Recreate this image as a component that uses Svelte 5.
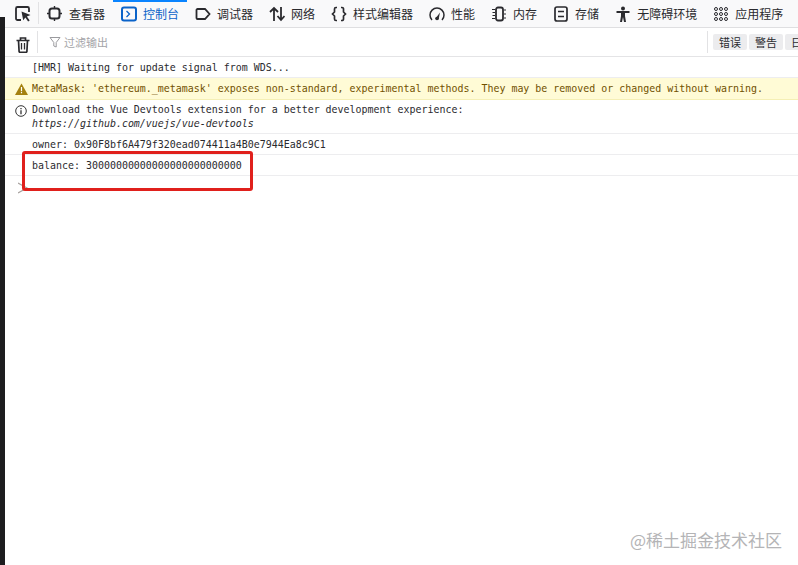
<script>
  const tabs = [
    { id: 'inspector', label: '查看器' },
    { id: 'console', label: '控制台', active: true },
    { id: 'debugger', label: '调试器' },
    { id: 'network', label: '网络' },
    { id: 'style', label: '样式编辑器' },
    { id: 'perf', label: '性能' },
    { id: 'memory', label: '内存' },
    { id: 'storage', label: '存储' },
    { id: 'a11y', label: '无障碍环境' },
    { id: 'app', label: '应用程序' }
  ];
</script>

<div class="page">
  <header class="tabs">
    <div class="picker">
      <svg width="18" height="18" viewBox="0 0 18 18" fill="none">
        <path d="M7 15H3.500A1.500 1.500 0 0 1 2 13.500V3.500A1.500 1.500 0 0 1 3.500 2h10A1.500 1.500 0 0 1 15 3.500V7" stroke="#2b2b2f" stroke-width="1.800"/>
        <path d="M7.500 6.500l9 3.500-3.600 1.400 2.800 4-1.600 1.100-2.700-4-2.200 2.800z" fill="#2b2b2f"/>
      </svg>
    </div>
    {#each tabs as t}
      <div class="tab" class:active={t.active}>
        <svg width="16" height="16" viewBox="0 0 16 16" fill="none" stroke="currentColor" stroke-width="1.600">
          {#if t.id === 'inspector'}
            <rect x="2.500" y="2.500" width="10" height="10" rx="2.500" stroke-width="2"/>
            <path d="M7.500 0v2.500M7.500 12.500V15M0 7.500h2.500M12.500 7.500H15" stroke-width="1.400"/>
          {:else if t.id === 'console'}
            <rect x="1" y="1.500" width="14" height="13" rx="2" stroke-width="2"/>
            <path d="M5.500 5l3 3-3 3" stroke-width="1.300"/>
          {:else if t.id === 'debugger'}
            <path d="M2.500 3h7.500l4.500 5-4.500 5H2.500a1 1 0 0 1-1-1V4a1 1 0 0 1 1-1z" stroke-width="1.800"/>
          {:else if t.id === 'network'}
            <path d="M5 15V2M1 6l4-4 4 4M12 1v13M8.500 10l3.500 4 3.500-4" stroke-width="1.800"/>
          {:else if t.id === 'style'}
            <path d="M6 1.500H5a1.500 1.500 0 0 0-1.500 1.500v3L1.500 8l2 2v3A1.500 1.500 0 0 0 5 14.500h1M10 1.500h1A1.500 1.500 0 0 1 12.500 3v3l2 2-2 2v3a1.500 1.500 0 0 1-1.500 1.500h-1" stroke-width="1.700"/>
          {:else if t.id === 'perf'}
            <path d="M3 14A7 7 0 1 1 13 14" stroke-width="1.500"/>
            <path d="M6.500 12.500L11 6.500 9.500 13.500z" fill="currentColor" stroke="none"/>
            <circle cx="8" cy="12.500" r="1.800" fill="currentColor" stroke="none"/>
          {:else if t.id === 'memory'}
            <rect x="5" y="1.500" width="7" height="13" rx="2" stroke-width="1.800"/>
            <path d="M1 3.500h3M1.500 6.500H4M1.500 9.500H4M1 12.500h3M13 4h2M13 8h2M13 12h2" stroke-width="1"/>
          {:else if t.id === 'storage'}
            <rect x="2" y="1" width="12" height="14" rx="2" stroke-width="1.700"/>
            <path d="M5 5.500h6M5 10.500h6" stroke-width="1.500"/>
          {:else if t.id === 'a11y'}
            <circle cx="8" cy="2.500" r="2" fill="currentColor" stroke="none"/>
            <path d="M1.500 6h13" stroke-width="2"/>
            <path d="M6 6h4v4l1 6H9L8 11l-1 5H5l1-6z" fill="currentColor" stroke="none"/>
          {:else}
            <g stroke-width="1">
              <circle cx="3" cy="3" r="1.500"/><circle cx="8" cy="3" r="1.500"/><circle cx="13" cy="3" r="1.500"/>
              <circle cx="3" cy="8" r="1.500"/><circle cx="8" cy="8" r="1.500"/><circle cx="13" cy="8" r="1.500"/>
              <circle cx="3" cy="13" r="1.500"/><circle cx="8" cy="13" r="1.500"/><circle cx="13" cy="13" r="1.500"/>
            </g>
          {/if}
        </svg>
        <span>{t.label}</span>
      </div>
    {/each}
  </header>

  <div class="filterbar">
    <div class="trash">
      <svg width="16" height="16" viewBox="0 0 16 16" fill="none" stroke="#2b2b2f" stroke-width="1.700">
        <path d="M1.500 3.500h13M5.500 3.500V1h5v2.500M3.500 3.500l.6 11a1 1 0 0 0 1 .8h5.800a1 1 0 0 0 1-.8l.6-11"/>
        <path d="M6.500 6v6.500M9.500 6v6.500" stroke-width="1.300"/>
      </svg>
    </div>
    <div class="filter">
      <svg width="12" height="12" viewBox="0 0 12 12" fill="none" stroke="#9a9a9e" stroke-width="1">
        <path d="M1 1.500h10L7.200 6.500V11L4.800 10V6.500z"/>
      </svg>
      <span>过滤输出</span>
    </div>
    <div class="chips">
      <span class="chip">错误</span>
      <span class="chip">警告</span>
      <span class="chip">日志</span>
    </div>
  </div>

  <div class="log">
    <div class="row">[HMR] Waiting for update signal from WDS...</div>
    <div class="row warn">
      <svg class="ico" width="13" height="12" viewBox="0 0 13 12">
        <path d="M6.500.5L13 12H0z" fill="#a4800f"/>
        <path d="M5.900 4h1.200v4.200H5.900zM5.900 9h1.200v1.300H5.900z" fill="#fff"/>
      </svg>
      MetaMask: 'ethereum._metamask' exposes non-standard, experimental methods. They may be removed or changed without warning.
    </div>
    <div class="row info">
      <svg class="ico" width="12" height="12" viewBox="0 0 12 12" fill="none" stroke="#333">
        <circle cx="6" cy="6" r="5.300"/>
        <path d="M6 5.200v4M6 3v1.200" stroke-width="1.300"/>
      </svg>
      <div>Download the Vue Devtools extension for a better development experience:<br /><em>https://github.com/vuejs/vue-devtools</em></div>
    </div>
    <div class="row">owner: 0x90F8bf6A479f320ead074411a4B0e7944Ea8c9C1</div>
    <div class="row">balance: 30000000000000000000000000</div>
    <div class="prompt">
      <svg width="12" height="12" viewBox="0 0 12 12" fill="none" stroke="#a8a29f" stroke-width="1.200">
        <path d="M0 1l9 5-9 5"/>
      </svg>
    </div>
  </div>

  <div class="strip"></div>
  <div class="mark"></div>
  <div class="watermark">@稀土掘金技术社区</div>
</div>

<style>
  :global(body) { margin: 0; background: #fff; }
  .page {
    position: relative;
    width: 798px;
    height: 565px;
    overflow: hidden;
    font-family: "Noto Sans CJK SC", "Noto Sans", sans-serif;
    color: #1f1f23;
  }
  .tabs {
    display: flex;
    height: 27px;
    background: #f9f9fa;
    border-bottom: 1px solid #dfdfe1;
    white-space: nowrap;
  }
  .picker {
    width: 39px;
    box-sizing: border-box;
    padding: 2px 0 0 14px;
    border-right: 1px solid #e2e2e4;
    height: 22px;
    margin-top: 2px;
    flex: none;
  }
  .tab {
    display: flex;
    align-items: center;
    gap: 6px;
    padding: 0 8px;
    font-size: 12px;
    flex: none;
    height: 27px;
    box-sizing: border-box;
    color: #2a2a2e;
    position: relative;
  }
  .tab.active { color: #0a63c9; }
  .tab.active::before {
    content: "";
    position: absolute;
    left: 0;
    right: 0;
    top: 0;
    height: 2px;
    background: #0a84ff;
  }
  .filterbar {
    display: flex;
    align-items: center;
    height: 28px;
    border-bottom: 1px solid #e4e4e6;
  }
  .trash {
    width: 38px;
    height: 22px;
    box-sizing: border-box;
    padding: 3px 0 0 15px;
    border-right: 1px solid #e2e2e4;
    flex: none;
  }
  .filter {
    display: flex;
    align-items: center;
    gap: 3px;
    padding-left: 11px;
    font-size: 11px;
    color: #a4a4a8;
    flex: 1;
  }
  .chips {
    display: flex;
    gap: 2px;
    width: 91px;
    height: 22px;
    box-sizing: border-box;
    padding: 3px 0 0 5px;
    border-left: 1px solid #e2e2e4;
    overflow: hidden;
    flex: none;
    align-items: flex-start;
  }
  .chip {
    background: #ececee;
    font-size: 11px;
    line-height: 16px;
    padding: 0 6px;
    border-radius: 2px;
    flex: none;
    color: #2a2a2e;
  }
  .log {
    font-family: "DejaVu Sans Mono", monospace;
    font-size: 9.96px;
    line-height: 13px;
  }
  .row {
    padding: 4px 0 3px 32px;
    border-bottom: 1px solid #ededef;
    position: relative;
    white-space: nowrap;
    color: #2a2a2e;
  }
  .warn {
    background: #fffbd6;
    color: #715100;
    border-bottom-color: #f5efb5;
    padding: 4px 0 4px 32px;
  }
  .info {
    line-height: 14px;
    padding: 3px 0 2px 32px;
  }
  .info em { font-style: italic; }
  .ico { position: absolute; left: 15px; top: 5px; }
  .prompt { padding: 6px 0 0 18px; }
  .strip {
    position: absolute;
    left: 0;
    top: 17px;
    bottom: 0;
    width: 5px;
    background: #1d1d1f;
  }
  .mark {
    position: absolute;
    left: 22px;
    top: 151px;
    width: 231px;
    height: 40px;
    box-sizing: border-box;
    border: 3px solid #e0201c;
    border-radius: 3px;
  }
  .watermark {
    position: absolute;
    right: 16px;
    bottom: 15px;
    font-size: 17px;
    line-height: 20px;
    color: #b4b4b6;
  }
</style>
